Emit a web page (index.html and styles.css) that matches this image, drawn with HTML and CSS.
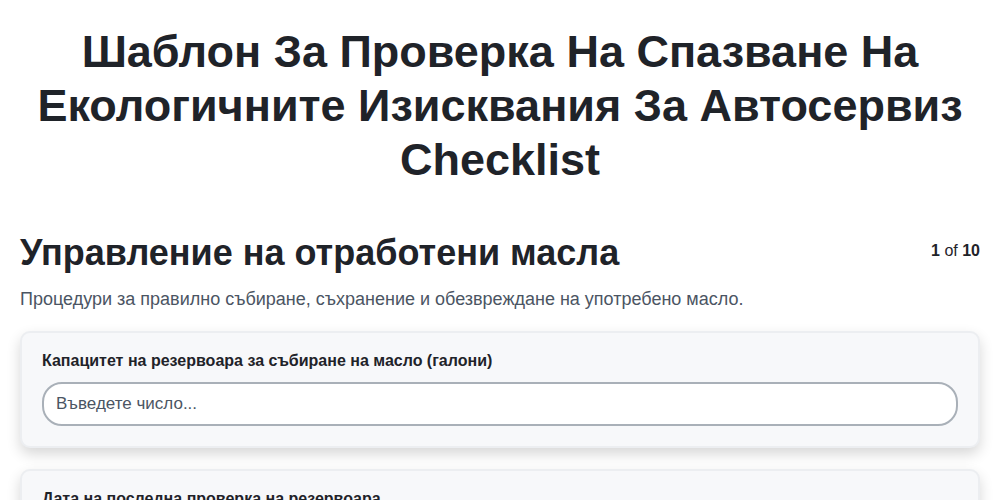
FILE: index.html
```html
<!DOCTYPE html>
<html lang="bg">
<head>
  <meta charset="UTF-8" />
  <title>Checklist</title>
  <link rel="stylesheet" href="styles.css">
</head>
<body>

  <h1 class="page-title">Шаблон За Проверка На Спазване На Екологичните Изисквания За Автосервиз Checklist</h1>

  <div class="section">
    <div class="section-head">
      <h2>Управление на отработени масла</h2>
      <span class="counter"><b>1</b> of <b>10</b></span>
    </div>
    <p class="section-desc">Процедури за правилно събиране, съхранение и обезвреждане на употребено масло.</p>

    <div class="card">
      <label for="q1">Капацитет на резервоара за събиране на масло (галони)</label>
      <input type="text" id="q1" placeholder="Въведете число..." />
    </div>

    <div class="card">
      <label for="q2">Дата на последна проверка на резервоара</label>
      <input type="text" id="q2" placeholder="Изберете дата..." />
    </div>
  </div>

</body>
</html>
```

FILE: styles.css
```css
body {
  margin: 0;
  padding: 0 20px;
  font-family: 'Liberation Sans', Arial, sans-serif;
  background: #fff;
  color: #1f2329;
}
.page-title {
  margin: 25px 0 0;
  font-size: 45px;
  line-height: 54px;
  text-align: center;
  font-weight: bold;
}
.section {
  margin-top: 44px;
}
.section-head {
  display: flex;
  justify-content: space-between;
  align-items: flex-start;
}
.section-head h2 {
  margin: 0;
  font-size: 36px;
  line-height: 44px;
}
.counter {
  font-size: 16px;
  margin-top: 11px;
  color: #1f2329;
}
.section-desc {
  margin: 13px 0 21px;
  font-size: 18px;
  line-height: 22px;
  color: #4b5563;
}
.card {
  background: #f7f8fa;
  border: 2px solid #eceef1;
  border-radius: 10px;
  padding: 19px 20px 20px;
  margin-bottom: 21px;
  box-shadow: 0 6px 14px rgba(0, 0, 0, 0.16);
}
.card label {
  display: block;
  font-weight: bold;
  font-size: 16px;
  line-height: 18px;
  margin-bottom: 12px;
}
.card input {
  box-sizing: border-box;
  width: 100%;
  height: 44px;
  padding: 0 12px;
  border: 2px solid #a9b0b8;
  border-radius: 20px;
  font-family: inherit;
  font-size: 17px;
  color: #1f2329;
  background: #fff;
}
.card input::placeholder {
  color: #4b5563;
}
```
